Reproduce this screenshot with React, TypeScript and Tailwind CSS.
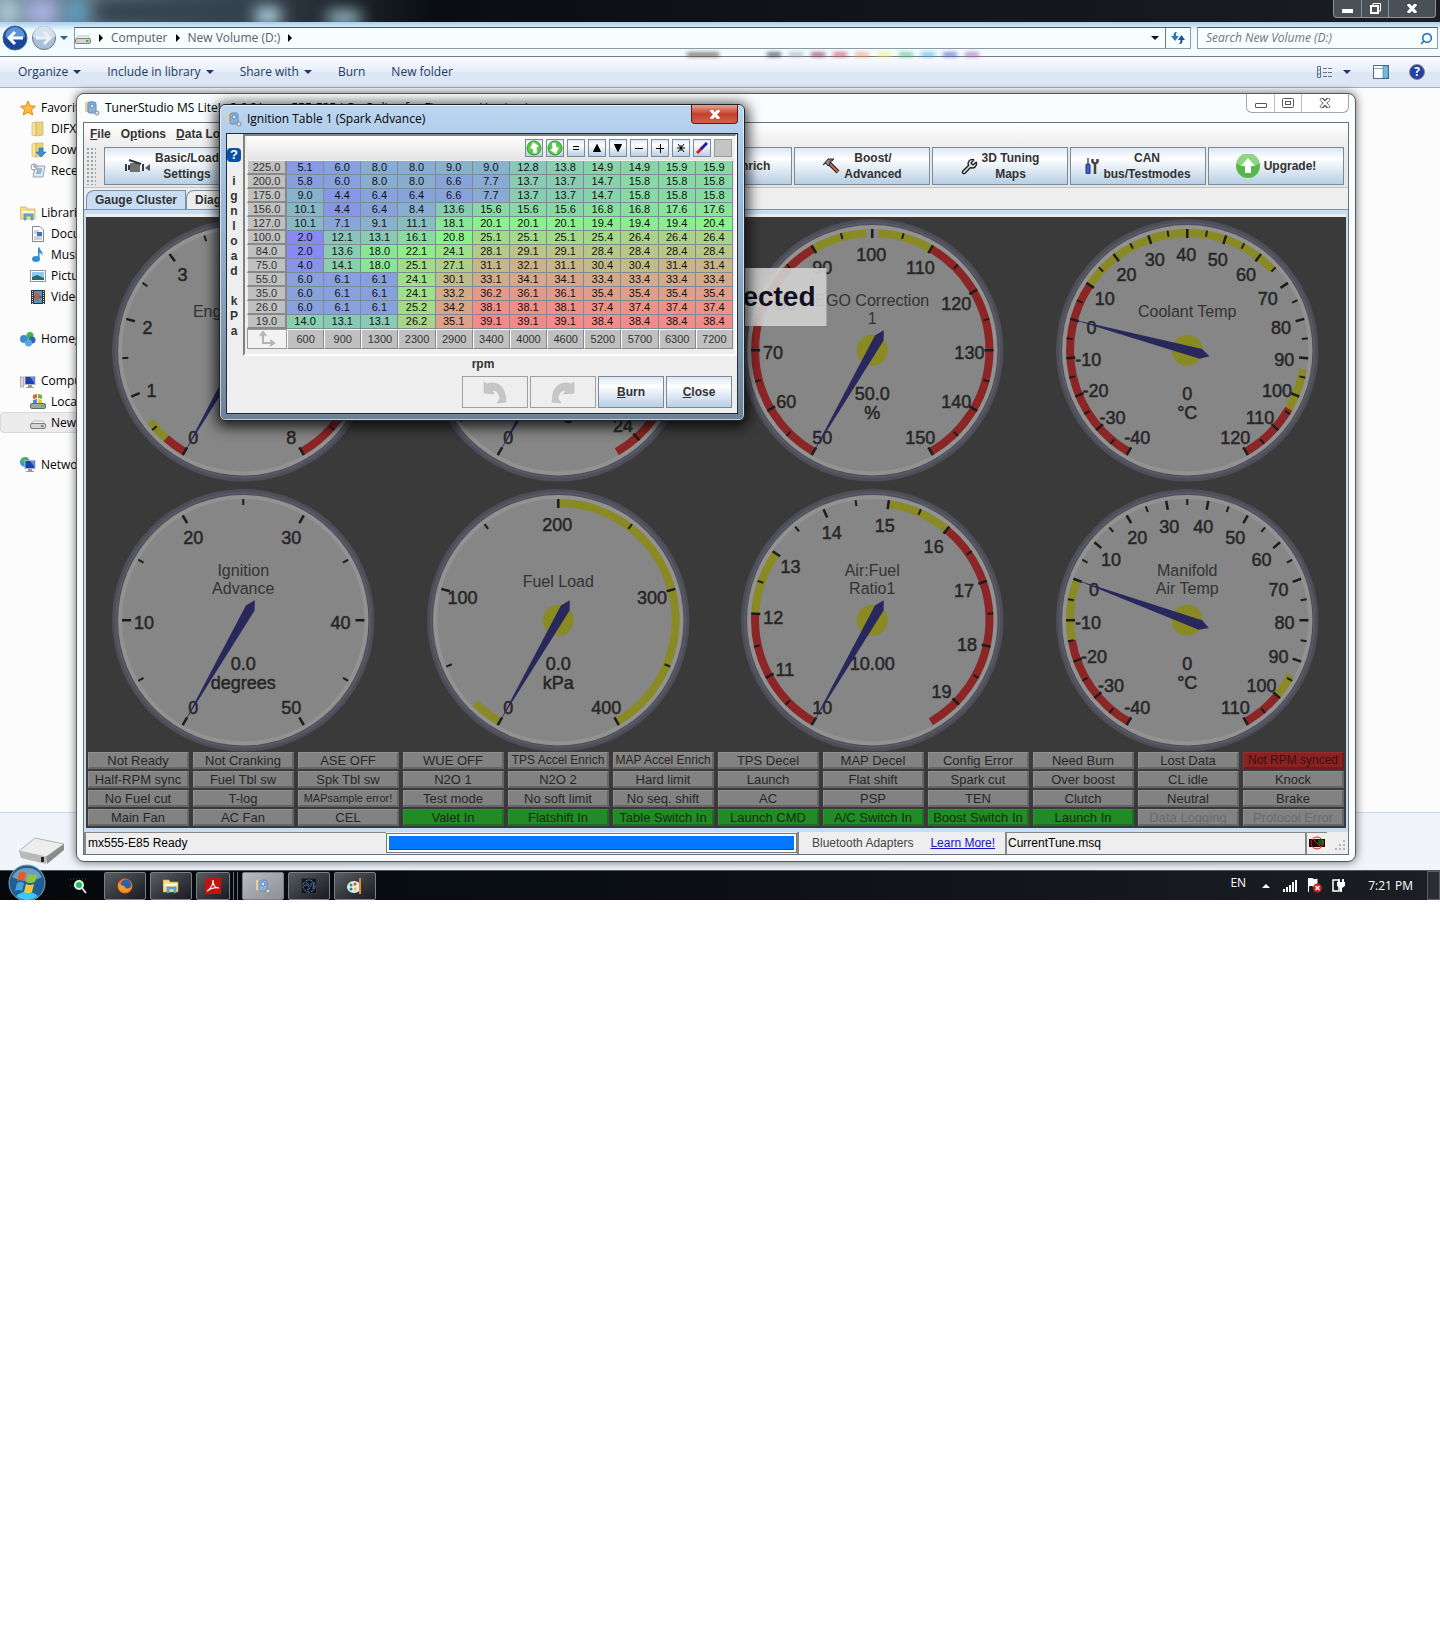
import { ReactNode } from "react";
import { Search, Wrench } from "lucide-react";

interface Band {
    from: number;
    to: number;
    color: string;
}

interface GaugeProps {
    title: string[];
    value: string;
    unit?: string;
    min: number;
    max: number;
    step: number;
    current: number;
    hub?: boolean;
    bands?: Band[];
}

const RED = "#8c2626";
const YELLOW = "#8a8a24";

const gauges: GaugeProps[] = [
    {
        title: ["Engine Speed"],
        value: "0",
        unit: "RPM",
        min: 0,
        max: 8,
        step: 1,
        current: 0,
        bands: [
            { from: 0, to: 0.3, color: RED },
            { from: 0.3, to: 0.6, color: YELLOW },
            { from: 7, to: 8, color: RED },
        ],
    },
    {
        title: ["Lag Angle"],
        value: "0.0",
        unit: "deg",
        min: 0,
        max: 25,
        step: 4,
        current: 0,
        hub: true,
        bands: [{ from: 21, to: 25, color: RED }],
    },
    {
        title: ["EGO Correction", "1"],
        value: "50.0",
        unit: "%",
        min: 50,
        max: 150,
        step: 10,
        current: 50,
        hub: true,
        bands: [
            { from: 50, to: 90, color: RED },
            { from: 90, to: 99, color: YELLOW },
            { from: 101, to: 110, color: YELLOW },
            { from: 110, to: 150, color: RED },
        ],
    },
    {
        title: ["Coolant Temp"],
        value: "0",
        unit: "°C",
        min: -40,
        max: 120,
        step: 10,
        current: 0,
        hub: true,
        bands: [
            { from: -40, to: 10, color: RED },
            { from: 10, to: 65, color: YELLOW },
            { from: 93, to: 104, color: YELLOW },
            { from: 104, to: 120, color: RED },
        ],
    },
    {
        title: ["Ignition", "Advance"],
        value: "0.0",
        unit: "degrees",
        min: 0,
        max: 50,
        step: 10,
        current: 0,
    },
    {
        title: ["Fuel Load"],
        value: "0.0",
        unit: "kPa",
        min: 0,
        max: 400,
        step: 100,
        current: 0,
        hub: true,
        bands: [
            { from: 0, to: 20, color: YELLOW },
            { from: 200, to: 400, color: YELLOW },
        ],
    },
    {
        title: ["Air:Fuel", "Ratio1"],
        value: "10.00",
        min: 10,
        max: 19.5,
        step: 1,
        current: 10,
        hub: true,
        bands: [
            { from: 10, to: 12, color: RED },
            { from: 12, to: 13, color: YELLOW },
            { from: 15, to: 16, color: YELLOW },
            { from: 16, to: 19.5, color: RED },
        ],
    },
    {
        title: ["Manifold", "Air Temp"],
        value: "0",
        unit: "°C",
        min: -40,
        max: 110,
        step: 10,
        current: 0,
        hub: true,
        bands: [
            { from: -40, to: -15, color: RED },
            { from: -15, to: 0, color: YELLOW },
            { from: 94, to: 100, color: YELLOW },
            { from: 100, to: 110, color: RED },
        ],
    },
];

// the dial sweeps 300 degrees, starting at 7 o'clock
const Gauge: React.FC<GaugeProps> = ({
    title,
    value,
    unit,
    min,
    max,
    step,
    current,
    hub,
    bands = [],
}) => {
    const angle = (v: number) => ((v - min) / (max - min)) * 300 - 150;
    const point = (v: number, r: number) => {
        const a = (angle(v) * Math.PI) / 180;
        return [Math.sin(a) * r, -Math.cos(a) * r];
    };
    const arc = (b: Band) => {
        const [x1, y1] = point(b.from, 117);
        const [x2, y2] = point(b.to, 117);
        const large = angle(b.to) - angle(b.from) > 180 ? 1 : 0;
        return `M${x1} ${y1}A117 117 0 ${large} 1 ${x2} ${y2}`;
    };
    const ticks: number[] = [];
    for (let v = min; v <= max; v += step / 2) ticks.push(v);
    if (max === 19.5) ticks.pop();

    return (
        <svg viewBox="-157 -133 314 268" className="block w-full">
            <circle r="131" fill="#4e4e5a" />
            <circle r="128" fill="#595964" />
            <circle r="126" fill="#4f4f59" />
            <circle r="125" fill="#929292" />
            <circle r="121" fill="#868686" />
            {bands.map((b) => (
                <path key={b.from} d={arc(b)} fill="none" stroke={b.color} strokeWidth="8" />
            ))}
            {ticks.map((v, i) => {
                const [x1, y1] = point(v, 121);
                const [x2, y2] = point(v, i % 2 ? 115 : 112);
                return (
                    <line
                        key={v}
                        x1={x1}
                        y1={y1}
                        x2={x2}
                        y2={y2}
                        stroke="#1c1c1c"
                        strokeWidth={i % 2 ? 2 : 2.5}
                    />
                );
            })}
            {hub && <circle r="15.5" fill={YELLOW} />}
            <g textAnchor="middle" fill="#262626" fontSize="18" stroke="#262626" strokeWidth="0.5">
                {ticks
                    .filter((_, i) => i % 2 === 0)
                    .map((v) => {
                        const [x, y] = point(v, 98);
                        return (
                            <text key={v} x={x - 1} y={y + 9}>
                                {v}
                            </text>
                        );
                    })}
                <text y="50">{value}</text>
                <text y="69">{unit}</text>
            </g>
            <g textAnchor="middle" fill="#333" fontSize="16">
                {title.map((line, i) => (
                    <text key={line} y={title.length === 1 ? -33 : i * 18 - 44}>
                        {line}
                    </text>
                ))}
            </g>
            <path
                d="M0 -119L5 14L0 23L-5 14Z"
                fill="#28285c"
                transform={`rotate(${angle(current)})`}
            />
        </svg>
    );
};

const indicators: string[][] = [
    ["Not Ready", "Not Cranking", "ASE OFF", "WUE OFF", "TPS Accel Enrich", "MAP Accel Enrich", "TPS Decel", "MAP Decel", "Config Error", "Need Burn", "Lost Data", "Not RPM synced"],
    ["Half-RPM sync", "Fuel Tbl sw", "Spk Tbl sw", "N2O 1", "N2O 2", "Hard limit", "Launch", "Flat shift", "Spark cut", "Over boost", "CL idle", "Knock"],
    ["No Fuel cut", "T-log", "MAPsample error!", "Test mode", "No soft limit", "No seq. shift", "AC", "PSP", "TEN", "Clutch", "Neutral", "Brake"],
    ["Main Fan", "AC Fan", "CEL", "Valet In", "Flatshift In", "Table Switch In", "Launch CMD", "A/C Switch In", "Boost Switch In", "Launch In", "Data Logging", "Protocol Error"],
];
const small = ["TPS Accel Enrich", "MAP Accel Enrich", "Not RPM synced"];
const inactive = ["Data Logging", "Protocol Error"];

const indicatorStyle = (name: string) => {
    let size = "text-[13px]";
    if (small.includes(name)) size = "text-xs";
    if (name === "MAPsample error!") size = "text-[11px]";
    if (name === "Not RPM synced")
        return `${size} bg-[#8a2222] border-[#962c2c] border-r-[#701a1a] border-b-[#701a1a] text-[#3c1010]`;
    if (inactive.includes(name))
        return `${size} bg-[#828282] border-[#909090] border-r-[#666] border-b-[#666] text-[#6a6a6a]`;
    if (/ In$|CMD$/.test(name))
        return `${size} bg-[#228a26] border-[#2c962e] border-r-[#1a701c] border-b-[#1a701c] text-[#10300f]`;
    return `${size} bg-[#828282] border-[#909090] border-r-[#666] border-b-[#666] text-[#262626]`;
};

const rpm = [600, 900, 1300, 2300, 2900, 3400, 4000, 4600, 5200, 5700, 6300, 7200];
const spark: { load: string; cells: number[] }[] = [
    { load: "225.0", cells: [5.1, 6, 8, 8, 9, 9, 12.8, 13.8, 14.9, 14.9, 15.9, 15.9] },
    { load: "200.0", cells: [5.8, 6, 8, 8, 6.6, 7.7, 13.7, 13.7, 14.7, 15.8, 15.8, 15.8] },
    { load: "175.0", cells: [9, 4.4, 6.4, 6.4, 6.6, 7.7, 13.7, 13.7, 14.7, 15.8, 15.8, 15.8] },
    { load: "156.0", cells: [10.1, 4.4, 6.4, 8.4, 13.6, 15.6, 15.6, 15.6, 16.8, 16.8, 17.6, 17.6] },
    { load: "127.0", cells: [10.1, 7.1, 9.1, 11.1, 18.1, 20.1, 20.1, 20.1, 19.4, 19.4, 19.4, 20.4] },
    { load: "100.0", cells: [2, 12.1, 13.1, 16.1, 20.8, 25.1, 25.1, 25.1, 25.4, 26.4, 26.4, 26.4] },
    { load: "84.0", cells: [2, 13.6, 18, 22.1, 24.1, 28.1, 29.1, 29.1, 28.4, 28.4, 28.4, 28.4] },
    { load: "75.0", cells: [4, 14.1, 18, 25.1, 27.1, 31.1, 32.1, 31.1, 30.4, 30.4, 31.4, 31.4] },
    { load: "55.0", cells: [6, 6.1, 6.1, 24.1, 30.1, 33.1, 34.1, 34.1, 33.4, 33.4, 33.4, 33.4] },
    { load: "35.0", cells: [6, 6.1, 6.1, 24.1, 33.2, 36.2, 36.1, 36.1, 35.4, 35.4, 35.4, 35.4] },
    { load: "26.0", cells: [6, 6.1, 6.1, 25.2, 34.2, 38.1, 38.1, 38.1, 37.4, 37.4, 37.4, 37.4] },
    { load: "19.0", cells: [14, 13.1, 13.1, 26.2, 35.1, 39.1, 39.1, 39.1, 38.4, 38.4, 38.4, 38.4] },
];

// blue -> green -> red over the table's range
const heat = (v: number) => {
    const t = (v - 2) / 37.1;
    const mix = (k: number) => Math.round(136 + 110 * k);
    if (t < 0.5) return `rgb(136, ${mix(t * 2)}, ${mix(1 - t * 2)})`;
    return `rgb(${mix(t * 2 - 1)}, ${mix(2 - t * 2)}, 136)`;
};

const Caret: React.FC<{ className?: string }> = ({ className = "text-[#1e395b]" }) => (
    <svg viewBox="0 0 8 4" className={`h-1 w-2 ${className}`} fill="currentColor">
        <path d="M0 0H8L4 4Z" />
    </svg>
);

const Crumb = () => (
    <svg viewBox="0 0 4 8" className="h-2 w-1" fill="#000">
        <path d="M0 0L4 4L0 8Z" />
    </svg>
);

const AppIcon = () => (
    <svg viewBox="0 0 16 16" className="h-4 w-4 shrink-0">
        <path d="M1 2L8 1V13L1 12Z" fill="#e6cf9a" />
        <rect x="4" y="2" width="8" height="11" rx="2" fill="#8db6e8" stroke="#5f87b8" />
        <circle cx="8" cy="6" r="2" fill="#e8f2ff" stroke="#4a7ac0" />
        <path d="M7 10L14 14" stroke="#9aa6b2" strokeWidth="2" />
        <circle cx="13" cy="13" r="2" fill="#dde3e8" stroke="#7e8a96" />
    </svg>
);

const Drive = () => (
    <svg viewBox="0 0 16 16" className="h-4 w-4 shrink-0">
        <path d="M3 6H13L15 9H1Z" fill="#f4f4f4" stroke="#9a9a9a" strokeWidth="0.6" />
        <rect x="0.5" y="8.5" width="15" height="5" rx="1.5" fill="#d4d4d4" stroke="#808080" />
        <rect x="11" y="10" width="2.5" height="2" fill="#3fae3a" />
    </svg>
);

const Folder: React.FC<{ children?: ReactNode }> = ({ children }) => (
    <svg viewBox="0 0 16 16" className="h-4 w-4 shrink-0">
        <path d="M2 2L6 1V15L2 14Z" fill="#f7e6a2" stroke="#c9a84c" strokeWidth="0.6" />
        <path d="M6 1H13V14L6 15Z" fill="#edd27a" stroke="#c9a84c" strokeWidth="0.6" />
        {children}
    </svg>
);

const Library = () => (
    <svg viewBox="0 0 16 16" className="h-4 w-4 shrink-0">
        <path d="M0 2H6L7 4H15V14H0Z" fill="#f3dc8c" stroke="#c4a24a" strokeWidth="0.6" />
        <path d="M2 6H14V8H2Z" fill="#fff7d6" />
        <path d="M4 15V9H13V15H11V11H6V15Z" fill="#5bb4e6" stroke="#3585bb" strokeWidth="0.6" />
    </svg>
);

const Monitor: React.FC<{ globe?: boolean }> = ({ globe }) => (
    <svg viewBox="0 0 16 16" className="h-4 w-4 shrink-0">
        {globe ? (
            <>
                <circle cx="5" cy="5" r="5" fill="#3a9ad0" />
                <path d="M2 2L6 1L5 5L2 6Z" fill="#4fb648" />
            </>
        ) : (
            <rect x="0.5" y="4" width="3" height="10" fill="#dcdcdc" stroke="#888" strokeWidth="0.6" />
        )}
        <rect x="5" y="3.5" width="10" height="8" fill="#1c3fb4" stroke="#b8b8b8" />
        <path d="M10 4H14.5V10Z" fill="#5e8af0" />
        <path d="M8 12H12V14H14V15H6V14H8Z" fill="#9a9a9a" />
    </svg>
);

const icons: Record<string, ReactNode> = {
    star: (
        <svg viewBox="0 0 16 16" className="h-4 w-4 shrink-0">
            <path d="M8 1L10.2 5.8L15.5 6.3L11.5 9.8L12.7 15L8 12.3L3.3 15L4.5 9.8L0.5 6.3L5.8 5.8Z" fill="#fdbb3b" stroke="#e08a1a" />
        </svg>
    ),
    folder: <Folder />,
    download: (
        <Folder>
            <path d="M9 6H13V10H16L11 15L6 10H9Z" fill="#3b8fd8" stroke="#1f66a8" strokeWidth="0.6" />
        </Folder>
    ),
    recent: (
        <svg viewBox="0 0 16 16" className="h-4 w-4 shrink-0">
            <path d="M5 3H15L13 14H3Z" fill="#dfe9f2" stroke="#7f93a6" strokeWidth="0.8" />
            <path d="M7 6H12M7 8H12M6 10H11" stroke="#5c86ad" />
            <circle cx="4" cy="4" r="3" fill="#fff" stroke="#8296a8" />
            <path d="M4 2V4H6" stroke="#456" fill="none" strokeWidth="0.8" />
        </svg>
    ),
    library: <Library />,
    documents: (
        <svg viewBox="0 0 16 16" className="h-4 w-4 shrink-0">
            <path d="M2.5 0.5H10L13.5 4V15.5H2.5Z" fill="#fff" stroke="#7c8a96" />
            <path d="M4 5H9M4 7H12M4 11H12M4 13H12" stroke="#88a" strokeWidth="0.8" />
            <rect x="7" y="6" width="5" height="4" fill="#3a78b8" />
        </svg>
    ),
    music: (
        <svg viewBox="0 0 16 16" className="h-4 w-4 shrink-0">
            <path d="M8 1L9.5 0C9.5 4 14 4 12 9C12 6 10 6 9.5 6V12H8Z" fill="#2f8fd6" />
            <ellipse cx="6" cy="12" rx="4" ry="3" fill="#2f8fd6" />
        </svg>
    ),
    pictures: (
        <svg viewBox="0 0 16 16" className="h-4 w-4 shrink-0">
            <rect x="0.5" y="2.5" width="15" height="11" fill="#fff" stroke="#8a98a4" />
            <rect x="2" y="4" width="12" height="8" fill="#8ccbf0" />
            <path d="M2 9L7 7L14 10V12H2Z" fill="#2b6a6c" />
        </svg>
    ),
    videos: (
        <svg viewBox="0 0 16 16" className="h-4 w-4 shrink-0">
            <rect x="1" y="1" width="14" height="14" fill="#333" />
            <rect x="4" y="2" width="8" height="5.5" fill="#4d97cc" />
            <rect x="4" y="8.5" width="8" height="5.5" fill="#4d97cc" />
            <path d="M5 3L10 6L8 12L5 10Z" fill="#c9573a" />
            <path d="M2.5 2V15M13.5 2V15" stroke="#ddd" strokeDasharray="1 1" />
        </svg>
    ),
    homegroup: (
        <svg viewBox="0 0 16 16" className="h-4 w-4 shrink-0">
            <circle cx="4" cy="8" r="4" fill="#3f8bcf" />
            <circle cx="10" cy="4.5" r="3.5" fill="#46b04c" />
            <circle cx="12" cy="9" r="3.5" fill="#2b66b8" />
            <circle cx="8.5" cy="12" r="3.5" fill="#5aa5dd" />
        </svg>
    ),
    computer: <Monitor />,
    local: (
        <svg viewBox="0 0 16 16" className="h-4 w-4 shrink-0">
            <path d="M3 1L7 0V4L3 5Z" fill="#e8622a" />
            <path d="M8 0L12 1V5L8 4Z" fill="#6cb33f" />
            <path d="M3 6L7 5V9L3 9Z" fill="#3f8fd8" />
            <path d="M8 5L12 6V9H8Z" fill="#f6c52c" />
            <rect x="0.5" y="9.5" width="15" height="5" rx="1.5" fill="#9aa8a4" stroke="#5d6a66" />
            <rect x="11" y="11" width="3" height="2" fill="#3fd03a" />
        </svg>
    ),
    drive: <Drive />,
    network: <Monitor globe />,
};

const nav: { icon: string; label: string; items: { icon: string; label: string }[] }[] = [
    {
        icon: "star",
        label: "Favorites",
        items: [
            { icon: "folder", label: "DIFX" },
            { icon: "download", label: "Downloads" },
            { icon: "recent", label: "Recent Places" },
        ],
    },
    {
        icon: "library",
        label: "Libraries",
        items: [
            { icon: "documents", label: "Documents" },
            { icon: "music", label: "Music" },
            { icon: "pictures", label: "Pictures" },
            { icon: "videos", label: "Videos" },
        ],
    },
    { icon: "homegroup", label: "Homegroup", items: [] },
    {
        icon: "computer",
        label: "Computer",
        items: [
            { icon: "local", label: "Local Disk (C:)" },
            { icon: "drive", label: "New Volume (D:)" },
        ],
    },
    { icon: "network", label: "Network", items: [] },
];

const Explorer = () => (
    <section className="flex flex-col bg-[#fcfcfc] font-['Open_Sans','Noto_Sans',sans-serif] text-xs text-[#1e395b]">
        <div className="flex h-[22px] items-start justify-end bg-linear-to-r from-[#7f97a8] via-[#0a0e13] via-30% to-[#1a1e24] pr-1">
            <div className="absolute top-0 left-0 flex h-6 blur-sm">
                <span className="mr-3 w-4 bg-[#bcd8e0]" />
                <span className="mr-3 w-7 bg-[#b0b4e8]" />
                <span className="mr-3 w-4 bg-[#58a8d0]" />
                <span className="w-40 bg-[#33414c]" />
                <span className="mt-2 w-6 bg-[#c8f0ff]" />
                <span className="mt-3 ml-12 w-8 bg-[#bfeaf6]" />
            </div>
            <div className="flex h-[18px] rounded-b border border-t-0 border-[#8b9299] bg-[#4a5058] text-white">
                <button aria-label="Minimize" className="flex w-7 items-end justify-center border-r border-[#8b9299] pb-1">
                    <span className="h-1 w-[11px] bg-white" />
                </button>
                <button aria-label="Restore" className="flex w-[27px] items-center justify-center border-r border-[#8b9299]">
                    <svg viewBox="0 0 11 11" className="h-[11px] w-[11px]" fill="none" stroke="#fff">
                        <path d="M3 2V0.5H10.5V8H9" />
                        <rect x="1" y="3" width="7" height="7" strokeWidth="2" />
                    </svg>
                </button>
                <button aria-label="Close" className="flex w-[46px] items-center justify-center">
                    <svg viewBox="0 0 10 9" className="h-[9px] w-[10px]" stroke="#fff" strokeWidth="3">
                        <path d="M1 0L9 9M9 0L1 9" />
                    </svg>
                </button>
            </div>
        </div>
        <div className="relative flex h-[35px] items-center gap-[6px] border-b border-[#6f7c88] bg-linear-to-b from-[#a9cdee] via-[#eefaff] via-25% to-[#f4fdfd] px-[2px] pb-[2px]">
            {/* colours of the window behind the glass */}
            <div className="absolute right-[32%] bottom-0 flex h-[3px] gap-2 blur-[2px]">
                <span className="mr-10 w-8 bg-[#4a4232]" />
                <span className="w-[14px] bg-[#222838]" />
                <span className="w-[14px] bg-[#9aa8b8]" />
                <span className="w-[14px] bg-[#8a2848]" />
                <span className="w-[14px] bg-[#c83a58]" />
                <span className="w-[14px] bg-[#ee9a6a]" />
                <span className="w-[14px] bg-[#f0ee70]" />
                <span className="w-[14px] bg-[#48b888]" />
                <span className="w-[14px] bg-[#48a8e0]" />
                <span className="w-[14px] bg-[#4858c8]" />
                <span className="w-[14px] bg-[#a858b8]" />
            </div>
            <div className="flex items-center gap-[3px]">
                <button aria-label="Back" className="rounded-full">
                    <svg viewBox="0 0 26 26" className="h-[26px] w-[26px]">
                        <circle cx="13" cy="13" r="12" fill="#17479a" stroke="#51657e" />
                        <path d="M3 12A10 10 0 0 1 23 12Q13 15 3 12" fill="#5a92d6" />
                        <path d="M21 13H8M13 7L7 13L13 19" stroke="#fff" strokeWidth="3" fill="none" />
                    </svg>
                </button>
                <button aria-label="Forward" className="rounded-full">
                    <svg viewBox="0 0 26 26" className="h-[26px] w-[26px]">
                        <circle cx="13" cy="13" r="11.5" fill="#a9c0da" stroke="#66788c" />
                        <path d="M2 12A11 11 0 0 1 24 12Q13 15 2 12" fill="#d3e0ee" />
                        <path d="M5 13H18M13 7L19 13L13 19" stroke="#e9f1f8" strokeWidth="3" fill="none" />
                    </svg>
                </button>
                <Caret className="text-[#2a5ca0]" />
            </div>
            <div className="flex h-[22px] flex-1 items-center border border-[#8b9ba6] border-t-[#4d5a64] bg-[#f6fefe] text-[#55606a]">
                <div className="flex flex-1 items-center gap-2">
                    <Drive />
                    <Crumb />
                    <button>Computer</button>
                    <Crumb />
                    <button>New Volume (D:)</button>
                    <Crumb />
                </div>
                <div className="pr-[6px]">
                    <Caret className="text-[#0a0a3c]" />
                </div>
                <button aria-label="Refresh" className="flex h-full w-[25px] items-center justify-center border-l border-[#6d7a84]">
                    <svg viewBox="0 0 14 12" className="h-3 w-[14px]" fill="#2f78b8">
                        <path d="M5 0C3 0 2.5 2 2.5 4H0L4 9L8 4H5C5 2 5 1 6 0Z" />
                        <path d="M9 12C11 12 11.5 10 11.5 8H14L10.5 3L7 8H9.5C9.5 10 9 11 8 12Z" fill="#1d4f92" />
                    </svg>
                </button>
            </div>
            <label className="flex h-[22px] w-[241px] items-center border border-[#8b9ba6] border-t-[#4d5a64] bg-[#f6fefe] pr-1 pl-2">
                <input
                    aria-label="Search"
                    placeholder="Search New Volume (D:)"
                    className="min-w-0 flex-1 bg-transparent italic outline-none placeholder:text-[#70787e]"
                />
                <Search className="h-[13px] w-[13px] -scale-x-100 text-[#2b6fc0]" strokeWidth={3} />
            </label>
        </div>
        <div className="flex h-[31px] items-center border-b border-[#a0afc3] bg-linear-to-b from-[#fafcff] from-0% via-[#e6eef9] via-49% to-[#dce6f4] to-51% pr-[15px] pl-[18px]">
            <div className="flex items-center gap-[26px]">
                <button className="flex items-center gap-[5px]">
                    Organize <Caret />
                </button>
                <button className="flex items-center gap-[5px]">
                    Include in library <Caret />
                </button>
                <button className="flex items-center gap-[5px]">
                    Share with <Caret />
                </button>
                <button>Burn</button>
                <button>New folder</button>
            </div>
            <div className="ml-auto flex items-center">
                <button aria-label="Change your view" className="flex items-center gap-[10px]">
                    <svg viewBox="0 0 16 12" className="h-3 w-4" fill="none" stroke="#5f7590">
                        <path d="M0.5 0.5H3.5V11.5H0.5ZM0.5 4H3.5M0.5 8H3.5" />
                        <path d="M6 2.5H16M6 6.5H16M6 10.5H16" strokeDasharray="4 1" />
                    </svg>
                    <Caret />
                </button>
                <button aria-label="Show the preview pane" className="ml-[22px]">
                    <svg viewBox="0 0 16 14" className="h-[14px] w-4">
                        <rect x="0.5" y="0.5" width="15" height="13" fill="#fff" stroke="#4c6c8c" />
                        <path d="M1 3.5H10" stroke="#8aa" />
                        <rect x="10" y="1" width="5" height="12" fill="#6fc0e0" stroke="#4c6c8c" strokeWidth="0.6" />
                    </svg>
                </button>
                <button
                    aria-label="Get help"
                    className="ml-5 flex h-4 w-4 items-center justify-center rounded-full border border-[#888] bg-[#2040a8] text-xs font-bold text-white"
                >
                    ?
                </button>
            </div>
        </div>
        <nav className="flex h-[724px] flex-col gap-[21px] pt-[9px] text-black">
            {nav.map((group) => (
                <ul key={group.label} className="w-[210px]">
                    <li className="flex h-[21px] items-center gap-[5px] pl-5">
                        {icons[group.icon]}
                        {group.label}
                    </li>
                    {group.items.map((item) => (
                        <li
                            key={item.label}
                            className={`flex h-[21px] items-center gap-[5px] rounded-sm pl-[30px] ${
                                item.icon === "drive"
                                    ? "bg-[#ececec] outline outline-[#d9d9d9] -outline-offset-1"
                                    : ""
                            }`}
                        >
                            {icons[item.icon]}
                            {item.label}
                        </li>
                    ))}
                </ul>
            ))}
        </nav>
        <div className="flex h-[58px] items-end border-t border-[#ccd8e8] bg-[#f1f4fb] pb-[6px] pl-[17px]">
            <svg viewBox="0 0 48 28" className="h-7 w-12">
                <path d="M2 15L18 2L47 8L29 21Z" fill="#ededed" stroke="#b4b4b4" />
                <path d="M2 15L29 21V28L4 22Z" fill="#b9b9b9" />
                <path d="M29 21L47 8V14L30 28Z" fill="#8c8c8c" />
                <rect x="24" y="21" width="3" height="5" fill="#222" />
            </svg>
        </div>
    </section>
);

const steel = "border border-[#7a8a99] bg-linear-to-b from-[#dde8f3] via-white via-30% to-[#b8cfe5]";

const ToolButton: React.FC<{ icon?: ReactNode; lines: string[] }> = ({ icon, lines }) => (
    <button
        className={`flex h-[38px] flex-1 items-center justify-center gap-1 text-center leading-4 ${steel}`}
    >
        {icon}
        <span>
            {lines.map((line) => (
                <span key={line} className="block">
                    {line}
                </span>
            ))}
        </span>
    </button>
);

const tools: { icon?: ReactNode; lines: string[] }[] = [
    {
        lines: ["Basic/Load", "Settings"],
        icon: (
            <svg viewBox="0 0 26 16" className="h-4 w-[26px]">
                <path d="M5 5H15V14H5Z" fill="#707070" />
                <path d="M4 2L16 6" stroke="#333" strokeWidth="2" />
                <path d="M1 6V13M4 7V12M18 6V13" stroke="#000" strokeWidth="1.5" />
                <path d="M20 10L25 6V13Z" fill="#555" />
            </svg>
        ),
    },
    { lines: ["Fuel", "Settings"] },
    { lines: ["Ignition", "Settings"] },
    { lines: ["Startup/Idle"] },
    {
        lines: ["Accel Enrich"],
        icon: (
            <svg viewBox="0 0 16 16" className="h-4 w-4">
                <path d="M2 14L8 2L14 14Z" fill="#999" stroke="#333" />
            </svg>
        ),
    },
    {
        lines: ["Boost/", "Advanced"],
        icon: (
            <svg viewBox="0 0 18 16" className="h-4 w-[18px]">
                <path d="M7 5L16 14" stroke="#3a1a10" strokeWidth="4" />
                <path d="M7 5L16 14" stroke="#c86a50" strokeWidth="2" />
                <path d="M1 7L6 1L12 1L10 3L8 3L8 6L6 8L4 5Z" fill="#8a8a8a" stroke="#222" />
            </svg>
        ),
    },
    {
        lines: ["3D Tuning", "Maps"],
        icon: <Wrench className="h-[17px] w-[17px] text-[#222]" fill="#ddd" strokeWidth={2} />,
    },
    {
        lines: ["CAN", "bus/Testmodes"],
        icon: (
            <svg viewBox="0 0 14 16" className="h-4 w-[14px]">
                <path d="M3 0V6" stroke="#555" strokeWidth="1.5" />
                <rect x="1" y="6" width="4" height="10" rx="1" fill="#3a62c8" stroke="#1c2f6c" />
                <path d="M7.5 1V4L10 6L12.5 4V1M10 6V16" stroke="#444" strokeWidth="2.5" fill="none" />
            </svg>
        ),
    },
    {
        lines: ["Upgrade!"],
        icon: (
            <svg viewBox="0 0 24 24" className="h-6 w-6">
                <circle cx="12" cy="12" r="12" fill="#55b848" />
                <path d="M1 10A11 11 0 0 1 23 10Q12 16 1 10" fill="#8fd480" />
                <path d="M12 4L19 12H15V19H9V12H5Z" fill="#fff" />
            </svg>
        ),
    },
];

const TunerStudio = () => (
    <section className="absolute top-[93px] right-[84px] left-[76px] rounded-lg border border-[#555b60] bg-[#f9fdfd] px-[6px] pb-[6px] shadow-[0_0_10px_rgba(0,0,0,0.6)]">
        <header className="flex h-7 items-start justify-between pl-[1px] font-['Open_Sans','Noto_Sans',sans-serif] text-xs text-black">
            <h1 className="flex h-7 items-center gap-[5px] whitespace-nowrap">
                <AppIcon />
                TunerStudio MS Lite! v2.6.21 - mx555-E85 ( Go Online for Firmware Version )
            </h1>
            <div className="flex h-[19px] rounded-b-md border border-t-0 border-[#9ea6ac] bg-white">
                <button aria-label="Minimize" className="flex w-7 items-center justify-center border-r border-[#b8bec2]">
                    <span className="mt-1 h-[5px] w-3 rounded-[1px] border border-[#555]" />
                </button>
                <button aria-label="Maximize" className="flex w-[27px] items-center justify-center border-r border-[#b8bec2]">
                    <svg viewBox="0 0 12 10" className="h-[10px] w-3" fill="none" stroke="#555">
                        <rect x="0.5" y="0.5" width="11" height="9" rx="1" />
                        <rect x="3.5" y="3.5" width="5" height="3" />
                    </svg>
                </button>
                <button aria-label="Close" className="flex w-[46px] items-center justify-center">
                    <svg viewBox="0 0 12 10" className="h-[10px] w-3">
                        <path d="M2 0L10 10M10 0L2 10" stroke="#555" strokeWidth="4" />
                        <path d="M2 1L10 9M10 1L2 9" stroke="#fff" strokeWidth="2" />
                    </svg>
                </button>
            </div>
        </header>
        <div className="border border-[#66727c] bg-[#eee] font-['Liberation_Sans',sans-serif] text-xs font-bold text-[#333]">
            <div className="flex h-6 items-center gap-[10px] bg-linear-to-b from-white to-[#ececec] px-[6px] pb-[2px]">
                <button><u>F</u>ile</button>
                <button>O<u>p</u>tions</button>
                <button><u>D</u>ata Logging</button>
            </div>
            <div className="flex gap-[2px] border-b border-[#c4c4c4] bg-linear-to-b from-[#ececec] to-[#e6e6e6] pr-1 pb-[2px] pl-[2px]">
                <div className="mr-[6px] w-[10px] bg-[radial-gradient(#a0a0a0_1px,transparent_1px)] bg-size-[4px_4px]" />
                {tools.map((tool) => (
                    <ToolButton key={tool.lines.join()} {...tool} />
                ))}
            </div>
            <div className="flex h-[22px] items-end border-b border-[#7a94b4] pl-[2px]">
                <button className="h-[19px] rounded-tl-lg border border-b-0 border-[#7a8fa8] bg-[#c8ddf2] px-2">
                    Gauge Cluster
                </button>
                <button className="h-[19px] rounded-tl-lg border border-b-0 border-[#7a8fa8] px-2">
                    Diagnostics
                </button>
            </div>
            <div className="border-x-2 border-t-4 border-b-4 border-[#c8ddf2]">
                <div className="relative mt-[3px] bg-[#3a3a3a] pb-[2px] font-normal">
                    <div className="-mb-1 grid grid-cols-4 gap-y-[2px] pr-[2px]">
                        {gauges.map((g) => (
                            <Gauge key={g.title[0]} {...g} />
                        ))}
                    </div>
                    <div className="absolute top-[51px] left-1/2 -translate-x-1/2 bg-[#d0d0d0]/90 px-[11px] py-[9px] text-[28px] leading-10 font-bold whitespace-nowrap text-[#101020]">
                        Not Connected
                    </div>
                    <div className="relative grid grid-cols-12 gap-x-1 gap-y-[2px] px-[2px]">
                        {indicators.flat().map((name) => (
                            <div
                                key={name}
                                className={`h-[17px] border-t border-r-2 border-b-2 border-l text-center leading-[15px] whitespace-nowrap ${indicatorStyle(name)}`}
                            >
                                {name}
                            </div>
                        ))}
                    </div>
                </div>
            </div>
            <footer className="flex h-[22px] items-stretch font-normal text-black">
                <div className="w-[302px] border-t border-l-2 border-[#888] pl-[2px] leading-5">
                    mx555-E85 Ready
                </div>
                <div className="my-[1px] flex-1 border border-[#777] bg-white p-[2px]">
                    <div className="h-full border-b border-[#1450a0] bg-[#0078ff]" />
                </div>
                <div className="flex w-[208px] items-center gap-[17px] border-l-2 border-[#888] pl-[13px] text-[#444]">
                    Bluetooth Adapters
                    <a href="#learn" className="text-[#1414c8] underline">
                        Learn More!
                    </a>
                </div>
                <div className="w-[300px] border-t border-l-2 border-[#888] pl-[1px] leading-5">
                    CurrentTune.msq
                </div>
                <div className="flex w-[22px] items-center justify-center border-t border-l-2 border-[#888]">
                    <svg viewBox="0 0 16 14" className="h-[14px] w-4">
                        <rect x="0" y="3" width="16" height="8" fill="#200" />
                        <rect x="9" y="4" width="6" height="5" fill="#0a5a14" />
                        <circle cx="8" cy="7" r="6" fill="none" stroke="#d22" />
                        <path d="M4 3L12 11" stroke="#d22" />
                    </svg>
                </div>
                <div className="w-[21px] pt-2 pl-2">
                    <svg viewBox="0 0 11 11" className="h-[11px] w-[11px]" fill="#b4b4b4">
                        <path d="M8 0H10V2H8ZM8 4H10V6H8ZM8 8H10V10H8ZM4 4H6V6H4ZM4 8H6V10H4ZM0 8H2V10H0Z" />
                    </svg>
                </div>
            </footer>
        </div>
    </section>
);

const GreenArrow: React.FC<{ down?: boolean }> = ({ down }) => (
    <svg viewBox="0 0 16 16" className={`h-4 w-4 ${down ? "rotate-180" : ""}`}>
        <circle cx="8" cy="8" r="7" fill="#5cc84a" stroke="#2f9a26" />
        <path d="M7 2L13 6L10.5 7.5L11 13L7.5 13.5L6.5 8.5L4 8.5Z" fill="#fff" />
    </svg>
);

const Glyph: React.FC<{ d: string; solid?: boolean }> = ({ d, solid }) => (
    <svg viewBox="0 0 10 10" className="h-[10px] w-[10px]" fill={solid ? "#000" : "none"} stroke="#000">
        <path d={d} />
    </svg>
);

const tableTools: { label: string; icon: ReactNode }[] = [
    { label: "Import", icon: <GreenArrow /> },
    { label: "Export", icon: <GreenArrow down /> },
    { label: "Set to", icon: <Glyph d="M2 3.5H8M2 6.5H8" /> },
    { label: "Increase", icon: <Glyph solid d="M1.5 8.5L5 1.5L8.5 8.5Z" /> },
    { label: "Decrease", icon: <Glyph solid d="M1.5 1.5H8.5L5 8.5Z" /> },
    { label: "Subtract", icon: <Glyph d="M1 5.5H9" /> },
    { label: "Add", icon: <Glyph d="M1 5.5H9M5.5 1V10" /> },
    { label: "Multiply", icon: <Glyph d="M1 5H9M2 1L8 9M8 1L2 9M5 2V8" /> },
    {
        label: "Interpolate",
        icon: (
            <svg viewBox="0 0 12 12" className="h-3 w-3" strokeWidth="3">
                <path d="M1 11L6 6" stroke="#d41c30" />
                <path d="M5 7L11 1" stroke="#2018b8" />
            </svg>
        ),
    },
];

const IgnitionTable = () => (
    <section
        aria-label="Ignition Table 1"
        className="absolute top-[104px] left-[219px] w-[526px] rounded-md border border-[#1c242c] bg-linear-to-b from-[#bcd6f0] via-[#a4c4e4] via-20% to-[#6d8296] px-[6px] pb-[6px] shadow-[0_3px_14px_3px_rgba(0,0,0,0.8)] inset-ring inset-ring-white/60"
    >
        <header className="flex h-[28px] items-start justify-between font-['Open_Sans','Noto_Sans',sans-serif] text-xs text-black">
            <h2 className="flex h-7 items-center gap-[5px]">
                <AppIcon />
                Ignition Table 1 (Spark Advance)
            </h2>
            <button
                aria-label="Close window"
                className="flex h-[19px] w-[47px] items-center justify-center rounded-b border border-t-0 border-[#5c1a18] bg-linear-to-b from-[#e8a090] from-0% via-[#c0402c] via-50% to-[#d4604a]"
            >
                <svg viewBox="0 0 10 9" className="h-[9px] w-[10px]" stroke="#fff" strokeWidth="3">
                    <path d="M1 0L9 9M9 0L1 9" />
                </svg>
            </button>
        </header>
        <div className="flex border border-[#222c36] bg-[#eee] font-['Liberation_Sans',sans-serif] text-xs text-[#333]">
            <div className="flex w-4 flex-col items-center pt-[14px] pr-[2px] font-bold">
                <button
                    aria-label="Help"
                    className="mb-3 flex h-[14px] w-[14px] items-center justify-center rounded-sm bg-[#0a50a8] text-[13px] text-white"
                >
                    ?
                </button>
                {"ignload kPa".split("").map((c, i) => (
                    <span key={i} className="h-[15px] leading-[15px]">
                        {c}
                    </span>
                ))}
            </div>
            <div className="flex-1">
                <div className="border-t-2 border-r-2 border-b-2 border-l-2 border-t-[#808080] border-r-white border-b-white border-l-[#808080] px-[2px] pb-[5px]">
                    <div className="flex h-6 items-center justify-end gap-[3px] bg-linear-to-b from-white to-[#e4e4e4] pr-[1px]">
                        {tableTools.map((tool) => (
                            <button
                                key={tool.label}
                                aria-label={tool.label}
                                className={`flex h-[18px] w-[18px] items-center justify-center ${steel}`}
                            >
                                {tool.icon}
                            </button>
                        ))}
                        <span className="h-[18px] w-[18px] border border-[#999] bg-[#c4c4c4]" />
                    </div>
                    <table className="mt-[1px] w-full table-fixed border-separate border-spacing-0 text-center text-[11px]">
                        <colgroup>
                            <col className="w-[40px]" />
                            {rpm.map((r) => (
                                <col key={r} />
                            ))}
                        </colgroup>
                        <tbody>
                            {spark.map((row) => (
                                <tr key={row.load} className="h-[14px]">
                                    <th className="border-r-2 border-b-2 border-l border-r-[#888] border-b-[#888] border-l-[#eee] bg-[#c0c0c0] p-0 leading-3 font-normal text-[#333]">
                                        {row.load}
                                    </th>
                                    {row.cells.map((v, i) => (
                                        <td
                                            key={i}
                                            className="border-r border-b border-[#7d8b98] p-0 leading-[13px] text-[#111]"
                                            style={{ backgroundColor: heat(v) }}
                                        >
                                            {v.toFixed(1)}
                                        </td>
                                    ))}
                                </tr>
                            ))}
                            <tr className="h-5">
                                <td className="border border-[#999] bg-[#f2f2f2] p-0">
                                    <svg viewBox="0 0 16 16" className="mx-auto h-4 w-4" fill="none" stroke="#b4b4b4" strokeWidth="2">
                                        <path d="M4 2V12H14M1 5L4 1L7 5M11 9L15 12L11 15" />
                                    </svg>
                                </td>
                                {rpm.map((r) => (
                                    <th
                                        key={r}
                                        className="border border-t-white border-r-[#888] border-b-[#888] border-l-white bg-[#c0c0c0] p-0 font-normal text-[#333]"
                                    >
                                        {r}
                                    </th>
                                ))}
                            </tr>
                        </tbody>
                    </table>
                </div>
                <p className="pr-[14px] text-center leading-4 font-bold">rpm</p>
                <div className="flex justify-end gap-[2px] pt-1 pr-[5px] pb-[5px] font-bold">
                    {["Undo", "Redo"].map((name) => (
                        <button
                            key={name}
                            aria-label={name}
                            disabled
                            className="flex h-8 w-[66px] items-center justify-center border border-[#a0a0a0]"
                        >
                            <svg viewBox="0 0 24 24" className={`h-6 w-6 ${name === "Redo" ? "-scale-x-100" : ""}`} fill="#c6c6c6" stroke="#b0b0b0" strokeWidth="0.5">
                                <path d="M1 2L4 4C12 1 20 5 22 14L23 22L14 23L17 19C17 14 14 10 9 10L11 14L1 13Z" />
                            </svg>
                        </button>
                    ))}
                    <button className={`h-8 w-[66px] ${steel}`}><u>B</u>urn</button>
                    <button className={`h-8 w-[66px] ${steel}`}><u>C</u>lose</button>
                </div>
            </div>
        </div>
    </section>
);

const TaskButton: React.FC<{ label: string; active?: boolean; children: ReactNode }> = ({
    label,
    active,
    children,
}) => (
    <button
        aria-label={label}
        className={`flex h-7 w-[42px] items-center justify-center rounded-xs border border-[#7c8084] bg-linear-to-br ${
            active ? "from-[#b8bcc0] to-[#8c9094]" : "from-[#5a5e62] to-[#181c20]"
        }`}
    >
        {children}
    </button>
);

const Taskbar = () => (
    <footer className="relative flex h-[30px] items-end border-t border-[#50585e] bg-linear-to-r from-[#04080b] via-[#0c1016] to-[#1b1f24] font-['Open_Sans','Noto_Sans',sans-serif] text-xs text-white">
        <button aria-label="Start" className="ml-2 h-[37px] w-[38px] shrink-0">
            <svg viewBox="0 0 38 37" className="h-[37px] w-[38px]">
                <circle cx="19" cy="20" r="18" fill="#1f5f94" stroke="#7fa8bc" />
                <path d="M4 14A17 17 0 0 1 34 14Q19 22 4 14" fill="#6f9fbc" />
                <path d="M8 33Q19 24 30 33Q19 41 8 33" fill="#3cc8f0" />
                <path d="M11 10Q14 8 18 10L16 18Q13 16 9 18Z" fill="#ea5a28" />
                <path d="M20 11Q24 13 29 11L27 19Q22 21 18 19Z" fill="#8cc63f" />
                <path d="M9 20Q12 18 16 20L14 28Q11 26 7 28Z" fill="#48a0e4" />
                <path d="M18 21Q22 23 26 21L24 29Q20 31 16 29Z" fill="#fbc72c" />
            </svg>
        </button>
        <div className="ml-6 flex h-7 w-[34px] items-center">
            <svg viewBox="0 0 18 16" className="h-4 w-[18px]">
                <path d="M0 1H18M0 8H6" stroke="#456" strokeDasharray="1 2" />
                <circle cx="9" cy="7" r="4" fill="#18c060" stroke="#dff5e8" strokeWidth="2" />
                <path d="M12 10L16 15" stroke="#ddd" strokeWidth="2" />
            </svg>
        </div>
        <div className="flex gap-1">
            <TaskButton label="Firefox">
                <svg viewBox="0 0 16 16" className="h-4 w-4">
                    <circle cx="8" cy="8" r="7.5" fill="#e8731c" />
                    <circle cx="9" cy="6.5" r="5" fill="#2c5fae" />
                    <path d="M1 4C2 8 6 6 8 9C9 11 12 11 14 9C13 15 3 16 1 9Z" fill="#f29a2c" />
                </svg>
            </TaskButton>
            <TaskButton label="Explorer">
                <Library />
            </TaskButton>
            <div className="flex w-[42px]">
                <button aria-label="Acrobat" className="flex h-7 w-[34px] items-center justify-center rounded-xs border border-[#7c8084] bg-linear-to-br from-[#5a5e62] to-[#181c20]">
                    <svg viewBox="0 0 16 16" className="h-4 w-4">
                        <rect width="16" height="16" fill="#c4120e" />
                        <path d="M2 13C6 11 8 6 8 2C8 7 10 10 14 10C10 9 6 10 2 13Z" fill="none" stroke="#fff" strokeWidth="1.2" />
                    </svg>
                </button>
                <span className="w-1 border-r border-[#666c70]" />
                <span className="w-1 border-r border-[#666c70]" />
            </div>
            <TaskButton label="TunerStudio" active>
                <AppIcon />
            </TaskButton>
            <TaskButton label="MegaSquirt">
                <svg viewBox="0 0 16 16" className="h-4 w-4" fill="none" stroke="#5878a8">
                    <rect x="0.5" y="0.5" width="15" height="15" fill="#101820" stroke="#333" />
                    <circle cx="8" cy="8" r="6" strokeDasharray="3 1" />
                    <path d="M3 8C6 4 8 12 10 7S13 6 12 11M5 4L8 7M6 12L9 10" />
                </svg>
            </TaskButton>
            <TaskButton label="Paint">
                <svg viewBox="0 0 16 16" className="h-4 w-4">
                    <ellipse cx="7" cy="9" rx="7" ry="6" fill="#e0ecf4" />
                    <circle cx="4" cy="7" r="1.5" fill="#2f9a4a" />
                    <circle cx="8" cy="6" r="1.5" fill="#e04a2a" />
                    <circle cx="4" cy="11" r="1.5" fill="#2c6cc8" />
                    <circle cx="8" cy="11" r="1.5" fill="#e8c02c" />
                    <path d="M13 0V16" stroke="#e08a2a" strokeWidth="2" />
                </svg>
            </TaskButton>
        </div>
        <div className="ml-auto flex h-[29px] items-center">
            <span className="pb-[5px]">EN</span>
            <svg viewBox="0 0 8 4" className="ml-4 h-1 w-2" fill="#fff">
                <path d="M0 4H8L4 0Z" />
            </svg>
            <svg viewBox="0 0 15 12" className="ml-[13px] h-3 w-[15px]" fill="#fff">
                <path d="M0 9H2V12H0ZM3 7H5V12H3ZM6 5H8V12H6ZM9 2H11V12H9ZM12 0H14V12H12Z" />
            </svg>
            <svg viewBox="0 0 14 15" className="ml-[10px] h-[15px] w-[14px]">
                <path d="M0.5 0V14M1 1C4 -1 6 3 9 1V8C6 10 4 6 1 8Z" fill="#fff" stroke="#fff" />
                <circle cx="9.5" cy="10" r="4.5" fill="#c82020" />
                <path d="M7.5 8L11.5 12M11.5 8L7.5 12" stroke="#fff" strokeWidth="1.5" />
            </svg>
            <svg viewBox="0 0 13 15" className="ml-[10px] h-[15px] w-[13px]">
                <path d="M1 2H7V13H1Z" fill="none" stroke="#fff" strokeWidth="1.5" />
                <path d="M5 4H13V8L10 10V14H8V10L5 8ZM6 1H8V4H6ZM10 1H12V4H10Z" fill="#fff" />
            </svg>
            <span className="ml-[23px]">7:21 PM</span>
            <button aria-label="Show desktop" className="ml-[14px] h-full w-[13px] border border-[#5c6064] bg-[#2a2e32]" />
        </div>
    </footer>
);

const App = () => {
    return (
        <main className="bg-white">
            <div className="relative overflow-hidden">
                <Explorer />
                <TunerStudio />
                <IgnitionTable />
                <Taskbar />
            </div>
        </main>
    );
};

export default App;
